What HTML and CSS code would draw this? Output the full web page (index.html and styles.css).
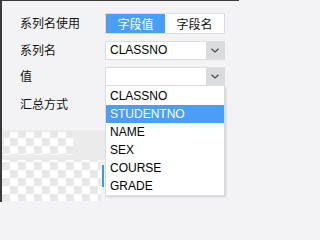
FILE: index.html
```html
<!DOCTYPE html>
<html lang="zh">
<head>
<meta charset="utf-8">
<link rel="stylesheet" href="styles.css">
</head>
<body>
<div class="frame">
  <div class="form">
    <span class="label">系列名使用</span>
    <div class="seg"><span class="seg-item on">字段值</span><span class="seg-item">字段名</span></div>

    <span class="label">系列名</span>
    <div class="select"><span class="val">CLASSNO</span><span class="arrow"><svg width="8" height="5" viewBox="0 0 8 5"><path d="M0.5 0.8 L4 4 L7.5 0.8" fill="none" stroke="#4a4a4a" stroke-width="1.2"/></svg></span></div>

    <span class="label">值</span>
    <div class="select open"><span class="val"></span><span class="arrow"><svg width="8" height="5" viewBox="0 0 8 5"><path d="M0.5 0.8 L4 4 L7.5 0.8" fill="none" stroke="#4a4a4a" stroke-width="1.2"/></svg></span>
      <ul class="menu">
        <li>CLASSNO</li>
        <li class="hl">STUDENTNO</li>
        <li>NAME</li>
        <li>SEX</li>
        <li>COURSE</li>
        <li>GRADE</li>
      </ul>
    </div>

    <span class="label">汇总方式</span>
    <span></span>
  </div>
  <div class="preview">
    <div class="band"><div class="checker top"></div></div>
    <div class="lower"><div class="checker"></div><span class="bar"></span></div>
  </div>
</div>
</body>
</html>
```

FILE: styles.css
```css
html, body {
  margin: 0;
  padding: 0;
}
html {
  background: #f3f3f5;
}
body {
  width: 239px;
  height: 202px;
  overflow: hidden;
  font-family: "Liberation Sans", "Noto Sans CJK SC", sans-serif;
  font-size: 12px;
  color: #111;
}
.frame {
  box-sizing: border-box;
  height: 202px;
  background: #f3f3f5;
  border-top: 1px solid #3a3a3a;
  border-left: 2px solid #3a3a3a;
}
.form {
  display: grid;
  grid-template-columns: 85px 120px;
  grid-template-rows: 21px 19px 19px 24px;
  row-gap: 7px;
  padding: 12px 0 0 18px;
  align-items: center;
}
.label {
  line-height: 16px;
}
.seg {
  box-sizing: border-box;
  height: 21px;
  display: flex;
  border: 1px solid #dcdcdc;
  background: #fff;
}
.seg-item {
  flex: 1;
  display: flex;
  align-items: center;
  justify-content: center;
  color: #111;
}
.seg-item.on {
  background: #4a9ff5;
  color: #fff;
}
.select {
  position: relative;
  box-sizing: border-box;
  height: 19px;
  display: flex;
  border: 1px solid #dcdcdc;
  background: #fff;
}
.val {
  flex: 1;
  padding-left: 4px;
  line-height: 17px;
  color: #000;
}
.arrow {
  width: 18px;
  background: #dadbde;
  display: flex;
  align-items: center;
  justify-content: center;
}
.menu {
  position: absolute;
  top: calc(100% + 1px);
  left: -1px;
  width: 120px;
  box-sizing: border-box;
  margin: 0;
  padding: 1px 0 0;
  list-style: none;
  background: #fff;
  border: 1px solid #dcdcdc;
  border-top: none;
  box-shadow: 1px 1px 2px rgba(0, 0, 0, 0.15);
  z-index: 2;
}
.menu li {
  height: 18px;
  line-height: 18px;
  padding-left: 4px;
  color: #000;
}
.menu li.hl {
  background: #4a9ff5;
  color: #fff;
}
.preview {
  margin-top: 13px;
  width: 103px;
}
.band {
  height: 30px;
  box-sizing: border-box;
  background: #ebebeb;
  padding: 2px 32px 5px 2px;
}
.checker {
  background: conic-gradient(#fff 0 25%, #e8e8e8 0 50%, #fff 0 75%, #e8e8e8 0);
  background-size: 16px 16px;
  background-position: 2px 2px;
  background-attachment: fixed;
}
.checker.top {
  height: 23px;
}
.lower {
  display: flex;
  height: 41px;
}
.lower .checker {
  width: 99px;
}
.bar {
  width: 2px;
  height: 22px;
  margin: 5px 0 0 1px;
  background: #3d95ee;
}
```
